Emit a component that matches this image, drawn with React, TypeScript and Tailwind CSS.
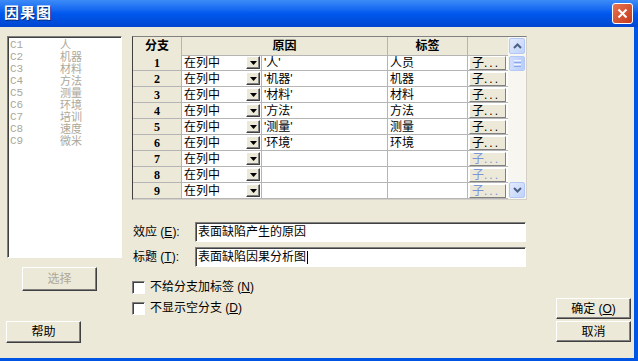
import React from "react";

type Row = {
  n: number;
  cause: string;
  label: string;
};

const rows: Row[] = [
  { n: 1, cause: "'人'", label: "人员" },
  { n: 2, cause: "'机器'", label: "机器" },
  { n: 3, cause: "'材料'", label: "材料" },
  { n: 4, cause: "'方法'", label: "方法" },
  { n: 5, cause: "'测量'", label: "测量" },
  { n: 6, cause: "'环境'", label: "环境" },
  { n: 7, cause: "", label: "" },
  { n: 8, cause: "", label: "" },
  { n: 9, cause: "", label: "" },
];

const columns = [
  ["C1", "人"],
  ["C2", "机器"],
  ["C3", "材料"],
  ["C4", "方法"],
  ["C5", "测量"],
  ["C6", "环境"],
  ["C7", "培训"],
  ["C8", "速度"],
  ["C9", "微米"],
];

function Chevron({ up }: { up?: boolean }) {
  return (
    <svg width="9" height="6" viewBox="0 0 9 6">
      <path
        d={up ? "M1 5 L4.5 1.5 L8 5" : "M1 1 L4.5 4.5 L8 1"}
        fill="none"
        stroke="#4D6185"
        strokeWidth="2"
      />
    </svg>
  );
}

function ScrollButton({ up }: { up?: boolean }) {
  return (
    <div className="flex h-[16px] w-[16px] items-center justify-center rounded-[2px] border border-[#B4C8F6] bg-gradient-to-br from-[#E3ECFE] to-[#BFD2FA]">
      <Chevron up={up} />
    </div>
  );
}

function ClassicButton({
  children,
  className,
  disabled,
}: {
  children: React.ReactNode;
  className: string;
  disabled?: boolean;
}) {
  return (
    <div
      className={
        "flex items-center justify-center border border-t-white border-l-white border-b-[#404040] border-r-[#404040] bg-[#ECE9D8] text-[12px] shadow-[inset_-1px_-1px_0_#808080] " +
        (disabled ? "text-[#ACA899] " : "text-black ") +
        className
      }
    >
      {children}
    </div>
  );
}

function CheckBox() {
  return (
    <div className="h-[13px] w-[13px] border border-t-[#808080] border-l-[#808080] border-b-white border-r-white bg-white shadow-[inset_1px_1px_0_#404040]" />
  );
}

function Field({ label, hotkey, value, caret }: { label: string; hotkey: string; value: string; caret?: boolean }) {
  return (
    <div className="flex h-[20px] items-center">
      <div className="w-[63px] pl-[1px] text-[12px]">
        {label} (<span className="underline">{hotkey}</span>):
      </div>
      <div className="flex h-[20px] w-[331px] items-center border border-t-[#808080] border-l-[#808080] border-b-white border-r-white bg-white pl-[2px] text-[12px] shadow-[inset_1px_1px_0_#404040]">
        {value}
        {caret && <span className="ml-[1px] h-[13px] w-px bg-black" />}
      </div>
    </div>
  );
}

export default function App() {
  return (
    <div className="flex h-[361px] w-[638px] flex-col overflow-hidden bg-[#0054E3] font-['Liberation_Sans','Noto_Sans_CJK_SC',sans-serif] text-black">
      {/* title bar */}
      <div className="flex h-[27px] items-center justify-between bg-gradient-to-b from-[#3D8BF7] via-[#0058EE] to-[#0046CF] pl-[4px] pr-[5px]">
        <span className="text-[15px] font-bold tracking-[1px] text-white [text-shadow:1px_1px_0_#0A2A7A]">因果图</span>
        <div className="flex h-[21px] w-[21px] items-center justify-center rounded-[3px] border border-white bg-gradient-to-br from-[#E8734F] to-[#C2391A]">
          <svg width="11" height="11" viewBox="0 0 11 11">
            <path d="M1.5 1.5 L9.5 9.5 M9.5 1.5 L1.5 9.5" stroke="white" strokeWidth="2" />
          </svg>
        </div>
      </div>

      <div className="mb-[3px] mr-[4px] flex flex-1 bg-[#ECE9D8]">
        {/* left column */}
        <div className="flex w-[132px] flex-col pl-[7px] pt-[9px]">
          <div className="h-[222px] w-[115px] border border-t-[#808080] border-l-[#808080] border-b-white border-r-white bg-white pl-[2px] pt-[2px] shadow-[inset_1px_1px_0_#404040]">
            {columns.map(([c, name]) => (
              <div key={c} className="flex h-[12px] items-center text-[11px] leading-[12px] text-[#ACA899]">
                <span className="w-[50px] font-['Liberation_Mono',monospace]">{c}</span>
                <span>{name}</span>
              </div>
            ))}
          </div>
          <ClassicButton disabled className="ml-[15px] mt-[9px] h-[24px] w-[75px]">
            选择
          </ClassicButton>
          <ClassicButton className="-ml-[1px] mt-[30px] h-[22px] w-[75px]">帮助</ClassicButton>
        </div>

        {/* middle column */}
        <div className="flex w-[395px] flex-col pt-[9px]">
          <div className="flex h-[164px] w-[395px] border border-t-[#808080] border-l-[#404040] border-b-[#D4D0C8] border-r-[#D4D0C8] bg-white">
            <div className="w-[375px]">
              <div className="grid h-[18px] grid-cols-[49px_206px_80px_40px] bg-[#ECE9D8] text-[12px] font-bold">
                <div className="flex items-center justify-center border-b border-r border-[#B5B5B5]">分支</div>
                <div className="flex items-center justify-center border-b border-r border-[#B5B5B5]">原因</div>
                <div className="flex items-center justify-center border-b border-r border-[#B5B5B5]">标签</div>
                <div className="border-b border-[#B5B5B5]" />
              </div>
              {rows.map((r) => {
                const active = r.label !== "";
                return (
                  <div key={r.n} className="grid h-[16px] grid-cols-[49px_80px_126px_80px_40px] text-[12px] leading-[14px]">
                    <div className="flex items-center justify-center border-b border-r border-[#B5B5B5] bg-[#ECE9D8] font-['Liberation_Serif',serif] font-bold">
                      {r.n}
                    </div>
                    <div className="flex items-center justify-between border-b border-r border-[#B5B5B5] pl-[2px] pr-[1px]">
                      <span>在列中</span>
                      <div className="flex h-[13px] w-[14px] items-center justify-center border border-t-white border-l-white border-b-[#404040] border-r-[#404040] bg-[#ECE9D8] shadow-[inset_-1px_-1px_0_#808080]">
                        <svg width="7" height="4" viewBox="0 0 7 4">
                          <path d="M0 0 H7 L3.5 4 Z" fill="black" />
                        </svg>
                      </div>
                    </div>
                    <div className="flex items-center border-b border-r border-[#B5B5B5] pl-[2px]">{r.cause}</div>
                    <div className="flex items-center border-b border-r border-[#B5B5B5] pl-[2px]">{r.label}</div>
                    <div className="flex items-center border-b border-[#B5B5B5] pl-[1px]">
                      <div
                        className={
                          "flex h-[14px] w-[37px] items-center border border-t-white border-l-white border-b-[#808080] border-r-[#808080] bg-[#ECE9D8] pl-[2px] leading-none " +
                          (active ? "text-black" : "text-[#7C97D8]")
                        }
                      >
                        子<span className="tracking-[2px]">...</span>
                      </div>
                    </div>
                  </div>
                );
              })}
            </div>
            {/* scrollbar */}
            <div className="flex w-[18px] flex-col justify-between bg-[#F7F6F1] py-[1px] pl-[1px]">
              <div className="flex flex-col gap-[2px]">
                <ScrollButton up />
                <div className="flex h-[15px] w-[16px] flex-col items-center justify-center gap-[1px] rounded-[2px] border border-[#B4C8F6] bg-gradient-to-r from-[#CFDDFD] to-[#BACEF9]">
                  <div className="h-px w-[7px] bg-[#EEF3FF]" />
                  <div className="h-px w-[7px] bg-[#8CA8E6]" />
                  <div className="h-px w-[7px] bg-[#EEF3FF]" />
                  <div className="h-px w-[7px] bg-[#8CA8E6]" />
                </div>
              </div>
              <ScrollButton />
            </div>
          </div>

          <div className="mt-[22px]">
            <Field label="效应" hotkey="E" value="表面缺陷产生的原因" />
          </div>
          <div className="mt-[5px]">
            <Field label="标题" hotkey="T" value="表面缺陷因果分析图" caret />
          </div>

          <div className="mt-[11px] flex items-center gap-[5px] text-[12px]">
            <CheckBox />
            <span>
              不给分支加标签 (<span className="underline">N</span>)
            </span>
          </div>
          <div className="mt-[3px] flex items-center gap-[5px] text-[12px]">
            <CheckBox />
            <span>
              不显示空分支 (<span className="underline">D</span>)
            </span>
          </div>
        </div>

        {/* right column */}
        <div className="flex flex-1 flex-col gap-[2px] pl-[29px] pt-[271px]">
          <ClassicButton className="h-[21px] w-[75px]">
            确定 (<span className="underline">O</span>)
          </ClassicButton>
          <ClassicButton className="h-[21px] w-[75px]">取消</ClassicButton>
        </div>
      </div>
    </div>
  );
}
